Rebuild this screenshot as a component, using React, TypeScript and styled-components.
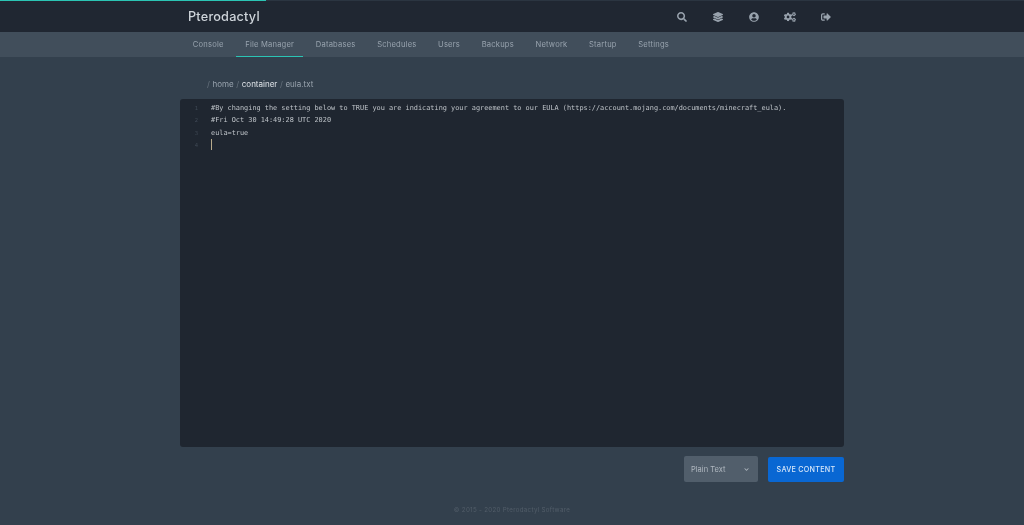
import React from "react";
import styled, { createGlobalStyle } from "styled-components";
import { FaSearch, FaLayerGroup, FaUserCircle, FaCogs, FaSignOutAlt, FaChevronDown } from "react-icons/fa";

const GlobalStyle = createGlobalStyle`
    html, body {
        margin: 0;
        padding: 0;
        height: 100%;
        background: #33404d;
    }
    * {
        box-sizing: border-box;
    }
`;

const tabs = ["Console", "File Manager", "Databases", "Schedules", "Users", "Backups", "Network", "Startup", "Settings"];
const lines = [
    "#By changing the setting below to TRUE you are indicating your agreement to our EULA (https://account.mojang.com/documents/minecraft_eula).",
    "#Fri Oct 30 14:49:28 UTC 2020",
    "eula=true",
    "",
];

const App = () => {
    return (
        <Page>
            <GlobalStyle />
            <Progress />
            <TopBar>
                <TopInner>
                    <Logo>Pterodactyl</Logo>
                    <Actions>
                        <IconLink><FaSearch size={10} /></IconLink>
                        <IconLink><FaLayerGroup size={10} /></IconLink>
                        <IconLink><FaUserCircle size={10} /></IconLink>
                        <IconLink><FaCogs size={12} /></IconLink>
                        <IconLink><FaSignOutAlt size={10} /></IconLink>
                    </Actions>
                </TopInner>
            </TopBar>
            <SubBar>
                <TabRow>
                    {tabs.map((tab) => (
                        <Tab key={tab} $active={tab === "File Manager"}>{tab}</Tab>
                    ))}
                </TabRow>
            </SubBar>
            <Content>
                <Crumbs>
                    <Sep>/</Sep>
                    <span>home</span>
                    <Sep>/</Sep>
                    <Strong>container</Strong>
                    <Sep>/</Sep>
                    <span>eula.txt</span>
                </Crumbs>
                <Editor>
                    <Gutter>
                        {lines.map((_, i) => (
                            <LineNo key={i}>{i + 1}</LineNo>
                        ))}
                    </Gutter>
                    <Code>
                        {lines.map((line, i) => (
                            <CodeLine key={i}>{line || <Caret />}</CodeLine>
                        ))}
                    </Code>
                </Editor>
                <Controls>
                    <Select>
                        <span>Plain Text</span>
                        <FaChevronDown size={5} />
                    </Select>
                    <SaveButton>SAVE CONTENT</SaveButton>
                </Controls>
            </Content>
            <Footer>© 2015 - 2020 Pterodactyl Software</Footer>
        </Page>
    );
};

export default App;

const Page = styled.div`
    position: relative;
    display: flex;
    flex-direction: column;
    height: 525px;
    overflow: hidden;
    background: #33404d;
    font-family: "Inter", "Liberation Sans", sans-serif;
    filter: blur(0.35px);
`;

const Progress = styled.div`
    position: absolute;
    top: 0;
    left: 0;
    width: 266px;
    height: 1px;
    background: #2bc4b4;
`;

const TopBar = styled.div`
    height: 32px;
    flex: none;
    background: #202732;
    border-top: 1px solid #2b3541;
`;

const TopInner = styled.div`
    display: flex;
    align-items: center;
    justify-content: space-between;
    width: 664px;
    height: 100%;
    margin: 0 auto;
    padding-left: 8px;
`;

const Logo = styled.div`
    color: #ced4da;
    font-size: 12.7px;
    font-weight: 500;
    letter-spacing: 0.2px;
`;

const Actions = styled.div`
    display: flex;
    align-items: center;
`;

const IconLink = styled.span`
    display: flex;
    align-items: center;
    justify-content: center;
    width: 36px;
    height: 16px;
    color: #98a2ad;
`;

const SubBar = styled.div`
    height: 25px;
    flex: none;
    background: #414e5b;
`;

const TabRow = styled.div`
    display: flex;
    width: 664px;
    height: 100%;
    margin: 0 auto;
    padding-left: 4px;
`;

const Tab = styled.div<{ $active?: boolean }>`
    display: flex;
    align-items: center;
    height: 100%;
    padding: 0 8.8px;
    margin-right: 4px;
    color: #98a3ae;
    font-size: 7.6px;
    letter-spacing: 0.2px;
    border-bottom: 1px solid ${(p) => (p.$active ? "#2bc4b4" : "transparent")};
`;

const Content = styled.div`
    display: flex;
    flex-direction: column;
    width: 664px;
    margin: 0 auto;
`;

const Crumbs = styled.div`
    display: flex;
    align-items: center;
    gap: 2.6px;
    height: 12px;
    margin: 21px 0 9px;
    padding-left: 27px;
    color: #99a3ae;
    font-size: 8px;
`;

const Sep = styled.span`
    color: #66717d;
`;

const Strong = styled.span`
    color: #dfe3e8;
`;

const Editor = styled.div`
    display: flex;
    height: 348px;
    padding-top: 3px;
    background: #1f2630;
    border-radius: 3px;
    font-family: "DejaVu Sans Mono", "Liberation Mono", monospace;
    font-size: 6.885px;
    line-height: 12.4px;
`;

const Gutter = styled.div`
    width: 31px;
    flex: none;
    padding-right: 13px;
    text-align: right;
`;

const LineNo = styled.div`
    height: 12.4px;
    color: #3f4955;
    font-size: 5.5px;
`;

const Code = styled.div`
    flex: 1;
    color: #bfc4c9;
`;

const CodeLine = styled.div`
    height: 12.4px;
    white-space: pre;
`;

const Caret = styled.span`
    display: block;
    width: 1px;
    height: 11px;
    background: #b8aa8c;
`;

const Controls = styled.div`
    display: flex;
    justify-content: flex-end;
    gap: 10px;
    margin-top: 9px;
`;

const Select = styled.div`
    display: flex;
    align-items: center;
    justify-content: space-between;
    width: 74px;
    height: 26px;
    padding: 0 9px 0 7px;
    background: #515e6b;
    border-radius: 2px;
    color: #b0b8c0;
    font-size: 7.5px;
`;

const SaveButton = styled.div`
    display: flex;
    align-items: center;
    justify-content: center;
    width: 76px;
    height: 25px;
    margin-top: 1px;
    background: #0967d3;
    border-radius: 2px;
    color: #d6e6f9;
    font-size: 7.2px;
    font-weight: 500;
    letter-spacing: 0.25px;
`;

const Footer = styled.div`
    margin-top: 24px;
    text-align: center;
    color: #525d69;
    font-size: 6.2px;
    letter-spacing: 0.3px;
`;
